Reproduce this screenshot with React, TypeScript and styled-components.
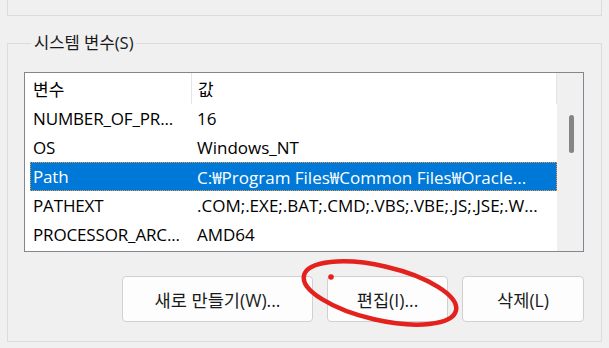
import { createGlobalStyle } from "styled-components";
import styled from "styled-components";

const GlobalStyle = createGlobalStyle`
  html, body {
    margin: 0;
    padding: 0;
    background: #f0f0f0;
    overflow: hidden;
  }
  body {
    font-family: "Open Sans", "Noto Sans CJK KR", sans-serif;
    color: #000;
  }
`;

const Page = styled.div`
  position: relative;
  width: 609px;
  height: 348px;
  padding: 0 7px 0 7px;
  box-sizing: border-box;
`;

const TopGroup = styled.div`
  height: 16px;
  border: 1px solid #dcdcdc;
  border-top: none;
  box-sizing: border-box;
`;

const Group = styled.fieldset`
  margin: 16px 0 0 0;
  padding: 18px 17px 0 16px;
  height: 310px;
  box-sizing: border-box;
  border: 1px solid #dcdcdc;
  display: flex;
  flex-direction: column;
`;

const Legend = styled.legend`
  margin-left: 7px;
  padding: 0 2px 0 3px;
  font-size: 16.6px;
  line-height: 22px;
  color: #1a1a1a;
`;

const ListBox = styled.div`
  height: 180px;
  border: 1px solid #82878f;
  background: #fff;
  display: flex;
  box-sizing: border-box;
  overflow: hidden;
`;

const ListBody = styled.div`
  flex: 1;
  min-width: 0;
  padding-left: 5px;
`;

const HeaderRow = styled.div`
  display: grid;
  grid-template-columns: 161px 1fr;
  height: 31px;
  align-items: center;
  font-size: 17px;
  border-right: 1px solid #e5e5e5;
`;

const HeaderCell = styled.div<{ $sep?: boolean }>`
  padding-left: ${(p) => (p.$sep ? "6px" : "3px")};
  height: 100%;
  display: flex;
  align-items: center;
  border-left: ${(p) => (p.$sep ? "1px solid #e5e5e5" : "none")};
`;

const Row = styled.div<{ $selected?: boolean }>`
  display: grid;
  grid-template-columns: 161px minmax(0, 1fr);
  height: 29px;
  align-items: center;
  font-size: 17px;
  white-space: nowrap;
  box-sizing: border-box;
  background: ${(p) => (p.$selected ? "#0078d7" : "transparent")};
  color: ${(p) => (p.$selected ? "#fff" : "#000")};
  outline: ${(p) => (p.$selected ? "1px dotted #f29b38" : "none")};
  outline-offset: -1px;
`;

const Cell = styled.div<{ $value?: boolean }>`
  padding-left: ${(p) => (p.$value ? "6px" : "3px")};
  letter-spacing: ${(p) => (p.$value ? "0" : "-0.15px")};
`;

const ScrollTrack = styled.div`
  width: 26px;
  flex-shrink: 0;
  background: #f0f0f0;
  display: flex;
  justify-content: center;
  padding-top: 42px;
  padding-left: 2px;
  box-sizing: border-box;
`;

const Thumb = styled.div`
  width: 5px;
  height: 38px;
  border-radius: 3px;
  background: #858585;
`;

const ButtonRow = styled.div`
  display: flex;
  justify-content: flex-end;
  gap: 14px;
  margin-top: 24px;
`;

const Button = styled.button<{ $w: number }>`
  width: ${(p) => p.$w}px;
  height: 46px;
  background: #fdfdfd;
  border: 1px solid #d0d0d0;
  border-radius: 4px;
  font-family: "Open Sans", "Noto Sans CJK KR", sans-serif;
  font-size: 17.6px;
  color: #1a1a1a;
  padding: 0;
`;

const Annotation = styled.svg`
  position: absolute;
  left: 0;
  top: 0;
  pointer-events: none;
`;

const rows = [
  { name: "NUMBER_OF_PR...", value: "16" },
  { name: "OS", value: "Windows_NT" },
  { name: "Path", value: "C:₩Program Files₩Common Files₩Oracle...", selected: true },
  { name: "PATHEXT", value: ".COM;.EXE;.BAT;.CMD;.VBS;.VBE;.JS;.JSE;.W..." },
  { name: "PROCESSOR_ARC...", value: "AMD64" },
];

export default function App() {
  return (
    <>
      <GlobalStyle />
      <Page>
        <TopGroup />
        <Group>
          <Legend>시스템 변수(S)</Legend>
          <ListBox>
            <ListBody>
              <HeaderRow>
                <HeaderCell>변수</HeaderCell>
                <HeaderCell $sep>값</HeaderCell>
              </HeaderRow>
              {rows.map((r) => (
                <Row key={r.name} $selected={r.selected}>
                  <Cell>{r.name}</Cell>
                  <Cell $value>{r.value}</Cell>
                </Row>
              ))}
            </ListBody>
            <ScrollTrack>
              <Thumb />
            </ScrollTrack>
          </ListBox>
          <ButtonRow>
            <Button $w={191}>새로 만들기(W)...</Button>
            <Button $w={121}>편집(I)...</Button>
            <Button $w={122}>삭제(L)</Button>
          </ButtonRow>
        </Group>
        <Annotation width="609" height="348" viewBox="0 0 609 348">
          <ellipse
            cx="380"
            cy="293"
            rx="78"
            ry="27"
            transform="rotate(13 380 293)"
            fill="none"
            stroke="#e3211d"
            strokeWidth="4.5"
          />
          <circle cx="331" cy="277" r="2.8" fill="#e3211d" />
        </Annotation>
      </Page>
    </>
  );
}
